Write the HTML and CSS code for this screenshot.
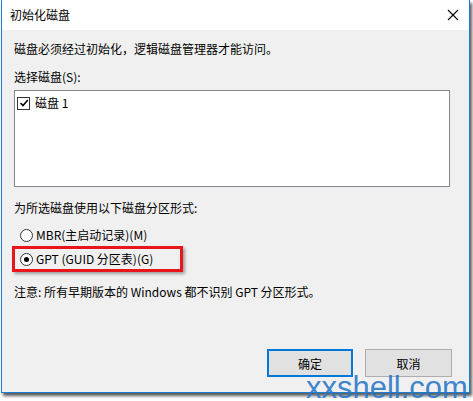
FILE: index.html
```html
<!DOCTYPE html>
<html lang="zh-CN">
<head>
<meta charset="utf-8">
<link rel="stylesheet" href="styles.css">
</head>
<body>
<div class="window">
  <div class="titlebar">
    <span class="title">初始化磁盘</span>
    <svg class="close" width="12" height="12" viewBox="0 0 12 12"><path d="M1 1L11 11M11 1L1 11" stroke="#000" stroke-width="1.1" fill="none"/></svg>
  </div>
  <div class="content">
    <p class="line first">磁盘必须经过初始化，逻辑磁盘管理器才能访问。</p>
    <p class="line sel">选择磁盘(S):</p>
    <div class="listbox">
      <div class="item">
        <span class="check"><svg width="10" height="10" viewBox="0 0 10 10"><path d="M1.5 5L4 7.5L8.8 2" stroke="#000" stroke-width="1.6" fill="none"/></svg></span>
        <span>磁盘 1</span>
      </div>
    </div>
    <p class="line style">为所选磁盘使用以下磁盘分区形式:</p>
    <div class="radio mbr"><span class="circle"></span><span>MBR(主启动记录)(M)</span></div>
    <div class="radio gpt"><span class="circle on"></span><span>GPT (GUID 分区表)(G)</span></div>
    <p class="line note">注意: 所有早期版本的 Windows 都不识别 GPT 分区形式。</p>
    <div class="buttons">
      <button class="btn primary">确定</button>
      <button class="btn">取消</button>
    </div>
    <div class="highlight"></div>
  </div>
</div>
<div class="watermark">xxshell.com</div>
</body>
</html>
```
FILE: styles.css
```css
html, body {
  margin: 0;
  padding: 0;
  background: #ffffff;
  width: 473px;
  height: 401px;
  overflow: hidden;
  position: relative;
  font-family: "Noto Sans CJK SC", "Noto Sans", sans-serif;
  font-size: 12px;
  color: #000;
}
.window {
  margin-left: 1px;
  width: 467px;
  height: 392px;
  border-left: 1px solid #1a7fd4;
  border-right: 1px solid #1a7fd4;
  border-bottom: 1px solid #1a7fd4;
  background: #f0f0f0;
  box-shadow: 2px 3px 3px rgba(0,0,0,0.65);
  display: flex;
  flex-direction: column;
  position: relative;
}
.titlebar {
  height: 30px;
  background: #ffffff;
  display: flex;
  align-items: center;
  justify-content: space-between;
  padding: 0 10px 0 8px;
  flex-shrink: 0;
}
.title {
  line-height: 16px;
  margin-top: -1px;
}
.close {
  display: block;
  margin-top: -1px;
}
.content {
  padding: 11px 17px 0 12px;
  display: flex;
  flex-direction: column;
  position: relative;
  flex: 1;
}
.line {
  margin: 0;
  line-height: 16px;
  height: 16px;
  white-space: nowrap;
}
.sel { margin-top: 12px; }
.listbox {
  margin-top: 5px;
  height: 95px;
  width: 432px;
  border: 1px solid #828790;
  background: #ffffff;
  padding: 5px 0 0 2px;
  box-sizing: content-box;
}
.listbox {
  height: 90px;
}
.item {
  display: flex;
  align-items: center;
  gap: 5px;
  line-height: 14px;
}
.check {
  width: 11px;
  height: 11px;
  border: 1px solid #333;
  background: #fff;
  display: flex;
  align-items: center;
  justify-content: center;
}
.style { margin-top: 13px; }
.radio {
  display: flex;
  align-items: center;
  gap: 3px;
  line-height: 16px;
  height: 16px;
  padding-left: 6px;
}
.mbr { margin-top: 11px; }
.gpt { margin-top: 8px; }
.circle {
  width: 11px;
  height: 11px;
  border: 1px solid #333;
  border-radius: 50%;
  background: #fff;
  position: relative;
}
.circle.on::after {
  content: "";
  position: absolute;
  left: 3px;
  top: 3px;
  width: 5px;
  height: 5px;
  border-radius: 50%;
  background: #000;
}
.note { margin-top: 17px; }
.buttons {
  margin-top: 49px;
  display: flex;
  justify-content: flex-end;
  gap: 12px;
}
.btn {
  width: 87px;
  height: 28px;
  font-family: inherit;
  font-size: 12px;
  color: #000;
  background: #e1e1e1;
  border: 1px solid #adadad;
  padding: 0;
  margin: 0;
}
.btn.primary {
  border: 2px solid #0078d7;
  width: 86px;
}
.highlight {
  position: absolute;
  left: 10px;
  top: 216px;
  width: 165px;
  height: 20px;
  border: 3px solid #e8161a;
  box-shadow: 2px 2px 3px rgba(0,0,0,0.35);
}
.watermark {
  position: absolute;
  left: 306px;
  top: 370px;
  font-family: "Liberation Sans", Arial, sans-serif;
  font-size: 31px;
  line-height: 36px;
  color: rgba(40, 118, 200, 0.9);
  white-space: nowrap;
}
```
